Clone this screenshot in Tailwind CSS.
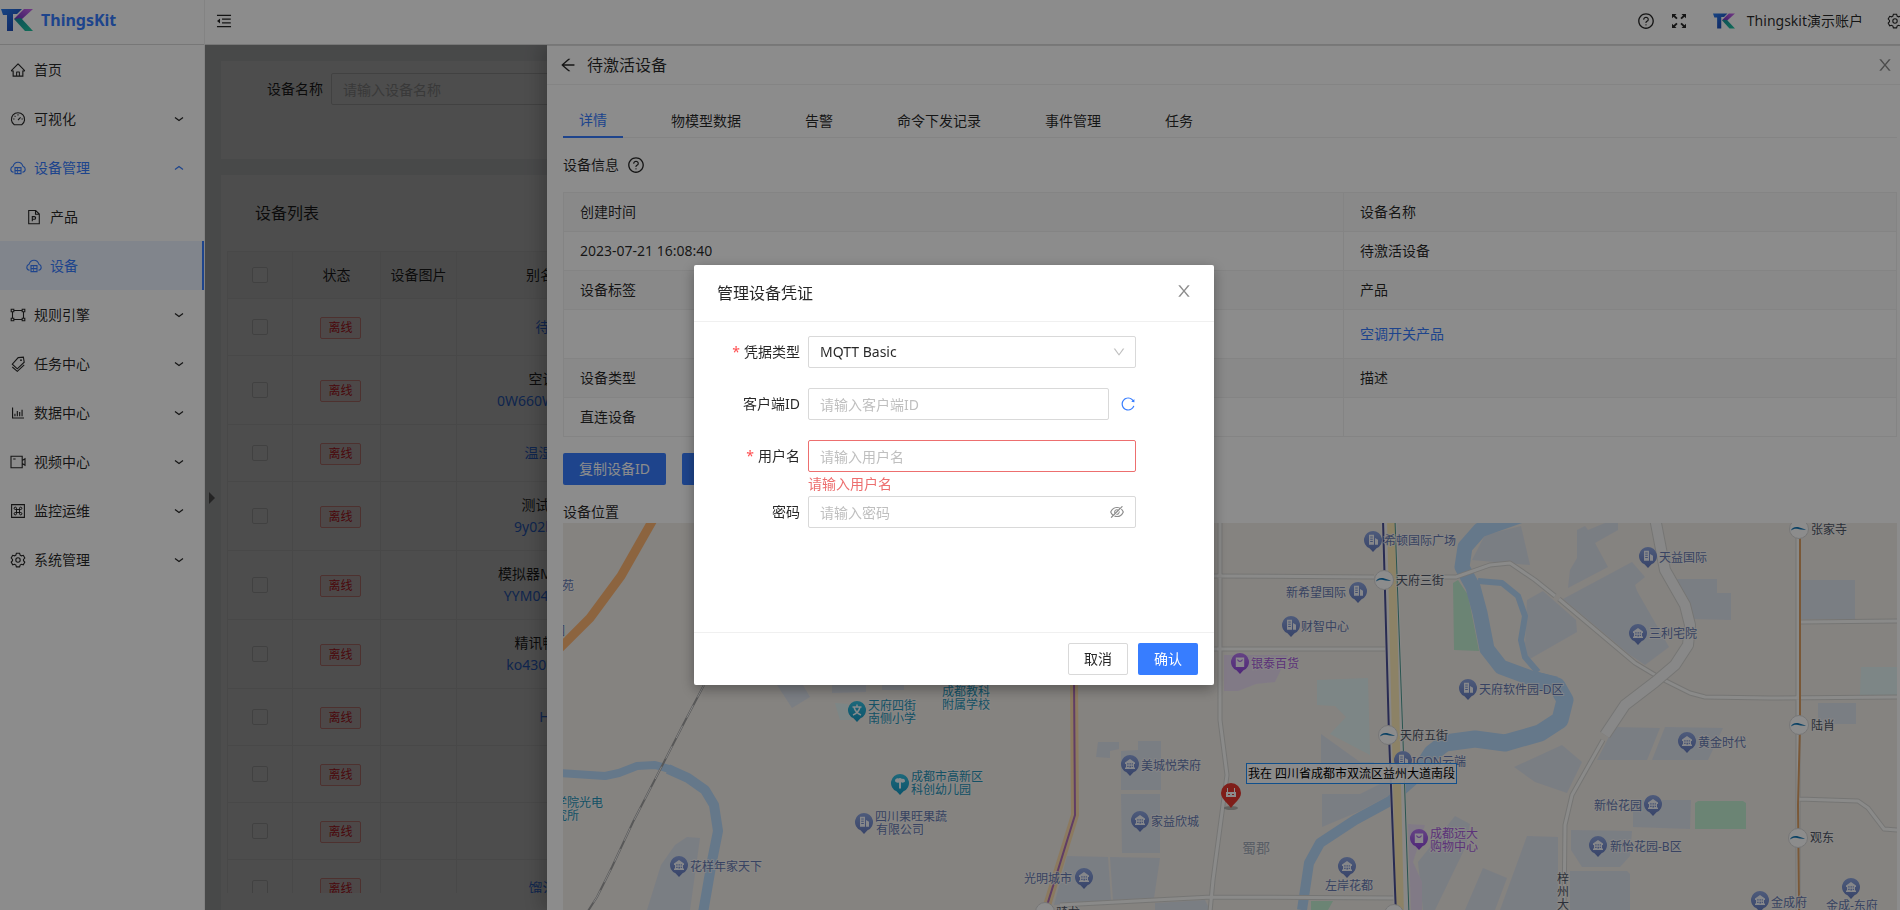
<!DOCTYPE html>
<html lang="zh-CN">
<head>
  <meta charset="UTF-8" />
  <meta name="viewport" content="width=device-width, initial-scale=1.0"/>
  <title>ThingsKit | 设备</title>
  <script src="https://cdn.jsdelivr.net/npm/@tailwindcss/browser@4"></script>
  <style>
    body {
      font-family: 'Noto Sans', 'Noto Sans CJK SC', sans-serif;
    }
  </style>
</head>
<body class="h-screen overflow-hidden bg-[#f0f2f5] text-sm leading-[22px] text-black/85">

  <!-- shared icons -->
  <svg class="absolute size-0" aria-hidden="true">
    <defs>
      <linearGradient id="tk-t" x1="0" y1="0" x2="1" y2="1"><stop offset="0" stop-color="#2a7df0"/><stop offset="1" stop-color="#1b3fa8"/></linearGradient>
      <linearGradient id="tk-k" x1="1" y1="0" x2="0" y2="1"><stop offset="0" stop-color="#d06af0"/><stop offset="1" stop-color="#6a2fc0"/></linearGradient>
      <linearGradient id="tk-g" x1="0" y1="0" x2="1" y2="1"><stop offset="0" stop-color="#1a8fa0"/><stop offset="1" stop-color="#1fc8a0"/></linearGradient>
      <linearGradient id="pin-blue-bg" x1="0" y1="0" x2="0" y2="1"><stop offset="0" stop-color="#8ea6e0"/><stop offset="1" stop-color="#667cc0"/></linearGradient>
      <linearGradient id="pin-teal-bg" x1="0" y1="0" x2="0" y2="1"><stop offset="0" stop-color="#35bfe0"/><stop offset="1" stop-color="#1598c4"/></linearGradient>
      <linearGradient id="pin-purple-bg" x1="0" y1="0" x2="0" y2="1"><stop offset="0" stop-color="#b77af0"/><stop offset="1" stop-color="#8f45dc"/></linearGradient>
    </defs>
    <symbol id="logo" viewBox="0 0 32 22">
      <path fill="url(#tk-t)" d="M0 0h21l-5 5h-4v17H6V6H2z"/>
      <path fill="url(#tk-k)" d="M23 0h9L20 11l-7-1z"/>
      <path fill="url(#tk-g)" d="M13 10l7-1 12 13h-8z"/>
    </symbol>
    <symbol id="i-fold" viewBox="0 0 1024 1024"><path d="M400 370v72h496v-72zM400 582v72h496v-72zM112 160v72h800v-72zM112 792v72h800v-72zM115.400 518.900L271.700 642c5.800 4.600 14.400.5 14.400-6.900V388.900c0-7.400-8.500-11.500-14.400-6.900L115.400 505.100a8.740 8.740 0 000 13.800z"/></symbol>
    <symbol id="i-question" viewBox="0 0 1024 1024"><path d="M512 64C264.600 64 64 264.600 64 512s200.600 448 448 448 448-200.600 448-448S759.400 64 512 64zm0 820c-205.400 0-372-166.600-372-372s166.600-372 372-372 372 166.600 372 372-166.600 372-372 372z"/><path d="M623.600 316.700C593.600 290.400 554 276 512 276s-81.600 14.500-111.600 40.700C369.200 344 352 380.700 352 420v7.600c0 4.400 3.600 8 8 8h48c4.400 0 8-3.600 8-8V420c0-44.100 43.100-80 96-80s96 35.900 96 80c0 31.100-22 59.600-56.100 72.700-21.200 8.100-39.200 22.300-52.100 40.900-13.100 19-19.900 41.800-19.900 64.900V620c0 4.400 3.600 8 8 8h48c4.400 0 8-3.600 8-8v-22.700a48.300 48.300 0 0130.900-44.800c59-22.700 97.100-74.700 97.100-132.500.1-39.300-17.100-76-48.300-103.300zM472 732a40 40 0 1080 0 40 40 0 10-80 0z"/></symbol>
    <symbol id="i-close" viewBox="0 0 1024 1024"><path d="M563.800 512l262.500-312.900c4.400-5.200.7-13.100-6.100-13.100h-79.800c-4.700 0-9.200 2.100-12.300 5.700L511.600 449.800 295.100 191.700c-3-3.600-7.500-5.700-12.300-5.700H203c-6.800 0-10.500 7.900-6.100 13.100L459.400 512 196.900 824.900A7.950 7.950 0 00203 838h79.800c4.700 0 9.200-2.100 12.300-5.700l216.500-258.100 216.500 258.100c3 3.600 7.500 5.700 12.300 5.700h79.800c6.800 0 10.500-7.900 6.100-13.100L563.800 512z"/></symbol>
    <symbol id="i-home" viewBox="0 0 1024 1024"><path d="M946.500 505L560.100 118.800l-25.900-25.900a31.500 31.500 0 00-44.400 0L77.500 505a63.900 63.900 0 00-18.800 46c.4 35.200 29.700 63.300 64.900 63.300h42.500V940h691.800V614.300h43.400c17.100 0 33.200-6.700 45.300-18.800a63.600 63.600 0 0018.700-45.300c0-17-6.700-33.100-18.800-45.200zM568 868H456V664h112v204zm217.900-325.700V868H632V640c0-22.100-17.900-40-40-40H432c-22.100 0-40 17.900-40 40v228H238.100V542.300h-96l370-369.700 23.100 23.100L882 542.300h-96.100z"/></symbol>
    <symbol id="i-reload" viewBox="0 0 1024 1024"><path d="M909.100 209.300l-56.400 44.100C775.800 155.100 656.200 92 521.900 92 290 92 102.300 279.500 102 511.500 101.700 743.700 289.800 932 521.900 932c181.300 0 335.800-115 394.600-276.100 1.500-4.200-.7-8.900-4.900-10.300l-56.700-19.500a8 8 0 00-10.100 4.800c-1.800 5-3.800 10-5.900 14.900-17.300 41-42.100 77.800-73.700 109.400A344.770 344.770 0 01655.900 829c-42.300 17.900-87.400 27-133.800 27-46.500 0-91.500-9.100-133.800-27A341.500 341.500 0 01279 755.200a342.160 342.160 0 01-73.700-109.400c-17.900-42.400-27-87.400-27-133.900s9.100-91.500 27-133.900c17.300-41 42.100-77.800 73.700-109.400 31.600-31.600 68.400-56.400 109.300-73.800 42.300-17.900 87.400-27 133.800-27 46.500 0 91.500 9.100 133.800 27a341.500 341.500 0 01109.300 73.800c9.900 9.900 19.200 20.400 27.800 31.400l-60.200 47a8 8 0 003 14.100l175.600 43c5 1.200 9.900-2.600 9.900-7.700l.8-180.900c-.1-6.600-7.800-10.300-13-6.200z"/></symbol>
    <symbol id="i-back" viewBox="0 0 1024 1024"><path d="M872 474H286.900l350.200-304c5.600-4.900 2.200-14-5.200-14h-88.500c-3.900 0-7.600 1.400-10.500 3.900L155 487.800a31.960 31.960 0 000 48.300L535.100 866c1.500 1.300 3.300 2 5.200 2h91.500c7.400 0 10.800-9.200 5.200-14L286.900 550H872c4.400 0 8-3.600 8-8v-60c0-4.400-3.600-8-8-8z"/></symbol>
    <symbol id="i-down" viewBox="0 0 1024 1024"><path d="M884 256h-75c-5.100 0-9.900 2.500-12.900 6.600L512 654.200 227.900 262.600c-3-4.100-7.800-6.600-12.900-6.600h-75c-6.500 0-10.300 7.400-6.500 12.700l352.600 486.100c12.800 17.600 39 17.600 51.700 0l352.600-486.100c3.900-5.300.1-12.700-6.400-12.700z"/></symbol>
    <symbol id="i-eye-off" viewBox="0 0 1024 1024"><path d="M942.200 486.200Q889.470 375.110 816.700 305l-50.880 50.880C807.310 395.530 843.450 447.400 874.700 512 791.500 684.200 673.400 766 512 766q-72.670 0-133.870-22.380L323 798.750Q408 838 512 838q288.300 0 430.200-300.300a60.290 60.290 0 000-51.500zm-63.570-320.640L836 122.880a8 8 0 00-11.320 0L715.310 232.200Q624.860 186 512 186q-288.300 0-430.200 300.300a60.300 60.300 0 000 51.500q56.690 119.400 136.500 191.410L112.480 835a8 8 0 000 11.310L155.170 889a8 8 0 0011.310 0l712.150-712.120a8 8 0 000-11.320zM149.300 512C232.600 339.800 350.700 258 512 258c54.540 0 104.130 9.360 149.120 28.390l-70.300 70.300a176 176 0 00-238.130 238.130l-83.420 83.420C223.100 637.490 183.300 582.280 149.300 512zm246.700 0a112.110 112.110 0 01146.200-106.690L401.310 546.200A112 112 0 01396 512z"/><path d="M508 624c-3.460 0-6.870-.16-10.250-.47l-52.820 52.820a176.090 176.090 0 00227.420-227.420l-52.820 52.820c.31 3.380.47 6.790.47 10.250a111.940 111.940 0 01-112 112z"/></symbol>
    <symbol id="i-chart" viewBox="0 0 1024 1024"><path d="M888 792H200V168c0-4.400-3.600-8-8-8h-56c-4.400 0-8 3.600-8 8v688c0 4.400 3.600 8 8 8h752c4.400 0 8-3.600 8-8v-56c0-4.400-3.600-8-8-8zM280 552h72v160h-72zM432 376h72v336h-72zM584 454h72v258h-72zM736 296h72v416h-72z"/></symbol>
    <symbol id="i-dash" viewBox="0 0 16 16"><path fill="none" stroke="currentColor" stroke-width="1.100" d="M4.300 13.800a6.600 6.600 0 1 1 7.400 0zM8 9l2.600-2.600M8 3.200v1.300M3.200 8h1.300M11.500 8h1.300M4.600 4.800l.9.9"/></symbol>
    <symbol id="i-cloud" viewBox="0 0 16 16"><path fill="none" stroke="currentColor" stroke-width="1.100" d="M3.600 12.300C1.800 12 .8 10.700.8 9.200c0-1.500 1-2.600 2.300-3C3.800 3.900 5.700 2.300 8 2.300s4.200 1.600 4.900 3.900c1.300.4 2.300 1.500 2.300 3 0 1.500-1 2.800-2.800 3.100M5 7.600h6v6H5zM5 10.600h6M7 9.100h1M7 12.100h1"/></symbol>
    <symbol id="i-doc" viewBox="0 0 16 16"><path fill="none" stroke="currentColor" stroke-width="1.100" d="M2.700 1.500h7l3.600 3.600v9.600H2.700zM9.500 1.700v3.600h3.700M6.300 12.200V7.600h2a1.300 1.300 0 0 1 0 2.600h-2"/></symbol>
    <symbol id="i-rule" viewBox="0 0 16 16"><path fill="none" stroke="currentColor" stroke-width="1.100" d="M1.200 2.200h2.600v2.600H1.200zM12.200 2.200h2.600v2.600h-2.600zM1.200 11.200h2.600v2.600H1.200zM12.200 11.200h2.600v2.600h-2.600zM3.800 3.500h8.400M3.800 12.500h8.400M2.500 4.800v6.400M13.500 4.800v6.400"/></symbol>
    <symbol id="i-tags" viewBox="0 0 16 16"><path fill="none" stroke="currentColor" stroke-width="1.100" d="M8.200 1.600l5.200-.4.800 5-6.900 6.600-5-4.600zM2.300 11l5 4.300 6.900-6.500"/><circle cx="11" cy="4.200" r=".9"/></symbol>
    <symbol id="i-video" viewBox="0 0 16 16"><path fill="none" stroke="currentColor" stroke-width="1.100" d="M1 2.200h11.200v11.600H1zM12.200 6.400l2.800-1.600v6.400l-2.800-1.600M3.200 5h2.400"/></symbol>
    <symbol id="i-monitor" viewBox="0 0 16 16"><path fill="none" stroke="currentColor" stroke-width="1.100" d="M1.600 1.600h12.800v12.800H1.600z"/><path fill="none" stroke="currentColor" d="M6.500 6.500h3v3h-3zM6.500 6.500H5.200a1.200 1.200 0 1 1 1.300-1.300zM9.500 6.500V5.200a1.200 1.200 0 1 1 1.300 1.300zM6.500 9.500v1.300a1.200 1.200 0 1 1-1.300-1.300zM9.500 9.500h1.300a1.200 1.200 0 1 1-1.300 1.300z"/></symbol>
    <symbol id="i-gear" viewBox="0 0 16 16"><path fill="none" stroke="currentColor" stroke-width="1.100" d="M6.400 1.200h3.200l.5 1.900 1.300.7 1.900-.5 1.500 2.700-1.300 1.400v1.300l1.300 1.400-1.500 2.700-1.900-.5-1.300.7-.5 1.900H6.400l-.5-1.900-1.300-.7-1.900.5-1.500-2.700 1.300-1.400V7.400L1.200 6l1.500-2.700 1.900.5 1.300-.7z"/><circle cx="8" cy="8" r="2.200" fill="none" stroke="currentColor" stroke-width="1.100"/></symbol>
    <symbol id="i-full" viewBox="0 0 16 16"><path d="M1 1h4.500L4 2.500l2.600 2.600-1.300 1.200L2.600 3.700 1 5.300zM15 1v4.300l-1.600-1.600-2.700 2.600-1.300-1.200L12 2.500 10.500 1zM1 15v-4.300l1.600 1.600 2.700-2.600 1.300 1.200L4 13.500 5.500 15zM15 15h-4.500l1.500-1.500-2.600-2.600 1.300-1.200 2.700 2.600 1.600-1.600z"/></symbol>
    <symbol id="i-chev" viewBox="0 0 10 10"><path fill="none" stroke="currentColor" stroke-width="1.200" d="M1 3.500l4 3 4-3"/></symbol>
    <!-- map pins, 20x24, round head centred on 10,10 -->
    <symbol id="pin-house" viewBox="0 0 20 24"><path fill="url(#pin-blue-bg)" d="M10 1a9 9 0 0 1 3.500 17.300L10 22l-3.500-3.700A9 9 0 0 1 10 1z"/><path fill="#f4f6fb" d="M5 8.500L10 5l5 3.500V10h-1v3.500h1V15H5v-1.500h1V10H5zM7.200 9.300v1.300h1.400V9.300zm2.300 0v1.300h1.400V9.300zm2.200 0v1.300h1.200V9.300zM7.200 11.800v1.300h1.400v-1.300zm2.300 0v1.700h1.400v-1.700zm2.200 0v1.300h1.200v-1.300z" fill-rule="evenodd"/></symbol>
    <symbol id="pin-tower" viewBox="0 0 20 24"><path fill="url(#pin-blue-bg)" d="M10 1a9 9 0 0 1 3.500 17.300L10 22l-3.500-3.700A9 9 0 0 1 10 1z"/><path fill="#f4f6fb" fill-rule="evenodd" d="M6 4.800h5v10H6zM7.200 6.500v1h2.600v-1zm0 2.300v1h2.600v-1zm0 2.300v1h2.600v-1zM12 8l3 1.800v5h-3z"/></symbol>
    <symbol id="pin-bag" viewBox="0 0 20 24"><path fill="url(#pin-purple-bg)" d="M10 1a9 9 0 0 1 3.500 17.300L10 22l-3.500-3.700A9 9 0 0 1 10 1z"/><path fill="#fbf6ff" d="M5.800 5.500h8.400V15H5.800z"/><path fill="none" stroke="#a25fe6" stroke-width="1.200" d="M7.600 7.500c.5 2.600 4.300 2.600 4.800 0"/></symbol>
    <symbol id="pin-school" viewBox="0 0 20 24"><path fill="url(#pin-teal-bg)" d="M10 1a9 9 0 0 1 3.500 17.300L10 22l-3.500-3.700A9 9 0 0 1 10 1z"/><path fill="none" stroke="#f4fbff" stroke-width="1.500" d="M10 4.500v2.300M5.500 7h9M7 7c.8 3.700 3 6.300 7 8M13 7c-.8 3.700-3 6.300-7 8"/></symbol>
    <symbol id="pin-kids" viewBox="0 0 20 24"><path fill="url(#pin-teal-bg)" d="M10 1a9 9 0 0 1 3.500 17.300L10 22l-3.500-3.700A9 9 0 0 1 10 1z"/><path fill="#f4fbff" d="M5 8c0-2 2-3.200 3.400-2.400C9.400 4.600 11 4.800 12 6c2-.6 3.200.6 3 2.600-.8 1-2.600 1.400-4 .6V15.500H9V9.400C7.600 10 5.600 9.600 5 8z"/></symbol>
    <symbol id="metro" viewBox="0 0 20 20"><circle cx="10" cy="10" r="9.500" fill="#fff" stroke="#d8d8d8"/><path fill="#1478b8" d="M2 11.500c.8-3 4.500-4.200 8.500-3 2.200.6 3.800 1.600 6.500 2-3 .6-5.500-.2-8-.6-3-.4-5 .2-7 1.600z"/></symbol>
  </svg>

  <div class="flex h-full">
    <aside class="relative z-20 flex w-[205px] shrink-0 flex-col border-r border-[#eeeeee] bg-white">
      <a href="#" class="flex h-[45px] shrink-0 items-center border-b border-[#d9d9d9] pb-1 pl-px text-base font-bold text-[#377dff]">
        <svg class="mr-2 h-[22px] w-8"><use href="#logo"/></svg>ThingsKit
      </a>
      <nav class="flex flex-col">
        <a href="#" class="flex h-[49px] items-center pl-2.5"><svg class="mr-2 size-4 fill-current"><use href="#i-home"/></svg>首页</a>
        <a href="#" class="flex h-[49px] items-center pl-2.5 pr-5"><svg class="mr-2 size-4 fill-current"><use href="#i-dash"/></svg>可视化<svg class="ml-auto size-2.5"><use href="#i-chev"/></svg></a>
        <a href="#" class="flex h-[49px] items-center pl-2.5 pr-5 text-[#377dff]"><svg class="mr-2 size-4 fill-current"><use href="#i-cloud"/></svg>设备管理<svg class="ml-auto size-2.5 rotate-180"><use href="#i-chev"/></svg></a>
        <a href="#" class="flex h-[49px] items-center pl-[26px]"><svg class="mr-2 size-4 fill-current"><use href="#i-doc"/></svg>产品</a>
        <a href="#" class="flex h-[49px] items-center border-r-2 border-[#377dff] bg-[#ebf2ff] pl-[26px] text-[#377dff]"><svg class="mr-2 size-4 fill-current"><use href="#i-cloud"/></svg>设备</a>
        <a href="#" class="flex h-[49px] items-center pl-2.5 pr-5"><svg class="mr-2 size-4 fill-current"><use href="#i-rule"/></svg>规则引擎<svg class="ml-auto size-2.5"><use href="#i-chev"/></svg></a>
        <a href="#" class="flex h-[49px] items-center pl-2.5 pr-5"><svg class="mr-2 size-4 fill-current"><use href="#i-tags"/></svg>任务中心<svg class="ml-auto size-2.5"><use href="#i-chev"/></svg></a>
        <a href="#" class="flex h-[49px] items-center pl-2.5 pr-5"><svg class="mr-2 size-4 fill-current"><use href="#i-chart"/></svg>数据中心<svg class="ml-auto size-2.5"><use href="#i-chev"/></svg></a>
        <a href="#" class="flex h-[49px] items-center pl-2.5 pr-5"><svg class="mr-2 size-4 fill-current"><use href="#i-video"/></svg>视频中心<svg class="ml-auto size-2.5"><use href="#i-chev"/></svg></a>
        <a href="#" class="flex h-[49px] items-center pl-2.5 pr-5"><svg class="mr-2 size-4 fill-current"><use href="#i-monitor"/></svg>监控运维<svg class="ml-auto size-2.5"><use href="#i-chev"/></svg></a>
        <a href="#" class="flex h-[49px] items-center pl-2.5 pr-5"><svg class="mr-2 size-4 fill-current"><use href="#i-gear"/></svg>系统管理<svg class="ml-auto size-2.5"><use href="#i-chev"/></svg></a>
      </nav>
    </aside>

    <div class="flex min-w-0 flex-1 flex-col">
      <header class="flex h-[45px] shrink-0 items-center overflow-hidden border-b border-[#d9d9d9] bg-white pb-0.5 pl-2.5">
        <button type="button" aria-label="收起菜单"><svg class="size-[18px] fill-current"><use href="#i-fold"/></svg></button>
        <div class="-mr-[3px] ml-auto flex items-center">
          <svg class="mr-4 size-[18px] fill-current"><use href="#i-question"/></svg>
          <svg class="mr-[26px] size-4 fill-current"><use href="#i-full"/></svg>
          <svg class="mr-3 h-4 w-[22px]"><use href="#logo"/></svg>
          <span class="mr-6">Thingskit演示账户</span>
          <svg class="size-4 fill-current"><use href="#i-gear"/></svg>
        </div>
      </header>

      <main class="relative flex min-h-0 flex-1 flex-col gap-4 overflow-hidden pl-4 pt-4">
        <section class="h-[98px] shrink-0 bg-white pl-[46px] pt-3">
          <div class="flex items-center gap-2">
            <label for="device-name">设备名称</label>
            <input id="device-name" type="text" placeholder="请输入设备名称" class="h-8 w-[360px] rounded-xs border border-[#d9d9d9] px-[11px] placeholder:text-[#bfbfbf]"/>
          </div>
        </section>
        <section class="flex min-h-0 flex-1 flex-col bg-white px-1.5 pb-[17px]">
          <h2 class="flex h-[76px] shrink-0 items-center pl-7 text-base">设备列表</h2>
          <div class="min-h-0 overflow-hidden">
            <table class="w-[458px] table-fixed border-separate border-spacing-0 border-l border-t border-[#f0f0f0] text-center">
              <thead>
                <tr class="h-[47px] bg-[#fafafa]">
                  <th class="w-[65px] border-b border-r border-[#f0f0f0]"><input type="checkbox" aria-label="全选" class="block mx-auto size-4 appearance-none rounded-xs border border-[#d9d9d9] bg-white"/></th>
                  <th class="w-[88px] border-b border-r border-[#f0f0f0] font-normal">状态</th>
                  <th class="w-[76px] border-b border-r border-[#f0f0f0] font-normal">设备图片</th>
                  <th class="w-[228px] border-b border-r border-[#f0f0f0] font-normal">别名/设备名称</th>
                </tr>
              </thead>
              <tbody id="device-rows"></tbody>
            </table>
          </div>
        </section>

        <!-- sider toggle -->
        <div class="absolute left-1 top-[447px] border-y-6 border-l-6 border-y-transparent border-l-black/50"></div>

        <!-- drawer -->
        <div class="absolute inset-0 bg-black/45"></div>
        <div class="absolute inset-y-0 left-[342px] right-0 flex flex-col border-t border-[#dddddd] bg-white shadow-[-6px_0_16px_rgba(0,0,0,0.2)]">
          <div class="flex h-[39px] shrink-0 items-center border-b border-[#f0f0f0] pl-3 pr-1.5">
            <button type="button" aria-label="返回" class="mr-2.5"><svg class="size-[18px] fill-current"><use href="#i-back"/></svg></button>
            <h2 class="text-base">待激活设备</h2>
            <button type="button" aria-label="关闭" class="ml-auto text-black/45"><svg class="size-[18px] fill-current"><use href="#i-close"/></svg></button>
          </div>
          <div class="flex min-h-0 flex-1 flex-col overflow-hidden pl-4 pr-[3px] pt-[19px]">
            <div role="tablist" class="flex h-[34px] shrink-0 gap-8 border-b border-[#f0f0f0]">
              <button type="button" role="tab" class="-mb-px border-b-2 border-[#377dff] px-4 text-[#377dff]">详情</button>
              <button type="button" role="tab" class="px-4">物模型数据</button>
              <button type="button" role="tab" class="px-4">告警</button>
              <button type="button" role="tab" class="px-4">命令下发记录</button>
              <button type="button" role="tab" class="px-4">事件管理</button>
              <button type="button" role="tab" class="px-4">任务</button>
            </div>
            <div class="flex h-[54px] shrink-0 items-center gap-2">设备信息<svg class="size-[18px] fill-current"><use href="#i-question"/></svg></div>
            <table class="w-full shrink-0 table-fixed border-separate border-spacing-0 border-l border-t border-[#f0f0f0] text-left">
              <colgroup><col class="w-[780px]"/><col/></colgroup>
              <tbody>
                <tr class="h-[39px] bg-[#fafafa]"><th class="border-b border-r border-[#f0f0f0] px-4 font-normal">创建时间</th><th class="border-b border-r border-[#f0f0f0] px-4 font-normal">设备名称</th></tr>
                <tr class="h-[39px]"><td class="border-b border-r border-[#f0f0f0] px-4">2023-07-21 16:08:40</td><td class="border-b border-r border-[#f0f0f0] px-4">待激活设备</td></tr>
                <tr class="h-[39px] bg-[#fafafa]"><th class="border-b border-r border-[#f0f0f0] px-4 font-normal">设备标签</th><th class="border-b border-r border-[#f0f0f0] px-4 font-normal">产品</th></tr>
                <tr class="h-[49px]"><td class="border-b border-r border-[#f0f0f0] px-4"></td><td class="border-b border-r border-[#f0f0f0] px-4"><a href="#" class="text-[#377dff]">空调开关产品</a></td></tr>
                <tr class="h-[39px] bg-[#fafafa]"><th class="border-b border-r border-[#f0f0f0] px-4 font-normal">设备类型</th><th class="border-b border-r border-[#f0f0f0] px-4 font-normal">描述</th></tr>
                <tr class="h-[39px]"><td class="border-b border-r border-[#f0f0f0] px-4">直连设备</td><td class="border-b border-r border-[#f0f0f0] px-4"></td></tr>
              </tbody>
            </table>
            <div class="mt-4 flex shrink-0 gap-4">
              <button type="button" class="h-8 rounded-xs bg-[#377dff] px-4 text-white">复制设备ID</button>
              <button type="button" class="h-8 rounded-xs bg-[#377dff] px-4 text-white">管理凭证</button>
            </div>
            <div class="mt-4 shrink-0">设备位置</div>
            <div class="relative min-h-0 flex-1 overflow-hidden bg-[#f2eee9]">
              <svg id="map" viewBox="563 523 1334 387" preserveAspectRatio="xMinYMin slice" class="h-full w-full">
                <g fill="#dfe5ef">
                  <path d="M647 910l14-45 14-20 12-8 13 1-10 72zM777 685h26l7 12-18 11zM832 685h34v7l-34 1zM882 685h22v5h-22z"/>
                  <path d="M1098 742h21v7l-9 2v7l-14-1zM1121 751l17-1v-9h23v49h-40zM1121 794h39v59h-38zM1067 856l41 1 3 43-57 5zM1110 857l50 1-6 40-41 2zM1155 903l50-3 5 10h-55z"/>
                  <path d="M1321 734l39 28h14v13h-53zM1322 794h38l30-15v16l-30 16-38 16zM1472 560l13-25 36-9 9 39zM1577 530l8-4 3 4 17-7h13v7l-23 13 13 24-40 21 2-18 7-12z"/>
                  <path d="M1563 599l69-37 13 15-10 8 2 6 32 56-24 18-15-10zM1527 600l16-9 33 29 1 12-49 28-3-15zM1675 579h42v14h14v27l-39-1zM1801 580h54v39h-54zM1818 703h38v21h-38z"/>
                  <path d="M1597 760l17-33 46 1-13 32zM1652 760l13-33 58 1-15 32zM1514 767l48-22 20 17-15 31-32-11zM1633 800h58l-1 29-57-2zM1571 830l61 1-2 25-10 11h-38l-11-17zM1527 836l31 1v73h-58zM1570 871h57l3 3v36h-60zM1418 862l37-46 15 8-4 22-31 64h-12zM1483 868l24 10-12 32h-30z"/>
                </g>
                <path fill="#e3f5f4" d="M1317 680l51-2 2 77-40-21 16-17-11-11-18-1zM1861 667h36v28h-37zM835 703l13 1 4 16h-12z"/>
                <path fill="#c3f0d3" d="M1453 583l5-3 10 15 11 56-25-1zM1695 803l3-2h45l3 2v26h-51zM1311 901h22l-5 9h-17z"/>
                <path fill="#ecdff5" d="M1224 655h64l-13 27-19 2-18 7h-14zM1408 824l17 1-12 37 9 20v28h-11z"/>
                <!-- rivers -->
                <g fill="none" stroke="#b8dafb" stroke-linejoin="round">
                  <path stroke-width="8" d="M560 773l45 3 14-3 18-7 18-1 18 5"/>
                  <path stroke-width="10" d="M668 769l20 9 17 12 9 15 4 26-6 30-9 52"/>
                  <path stroke-width="15" d="M1525 514l-45 16-15 17-3 20 11 20 7 26 7 36 14 18 30 11 25 6"/>
                  <path stroke-width="17" d="M1535 680l22 6 8 14-5 20-20 13-35 10-30-4-30 4-13 10-13 20"/>
                  <path stroke-width="10" d="M1425 770l-35 31-35 19-35 23-11 20-7 47"/>
                  <path stroke-width="6" d="M1478 581l24 2 16 13 7 20-4 24 4 17 13 15"/>
                </g>
                <!-- minor roads: casing, then fill -->
                <g fill="none" stroke-linejoin="round">
                  <path stroke="#d6d6d3" stroke-width="5" d="M1220 520v200l7 55-14 105-3 32M1214 649h176M1214 576l160 1M1396 577h60l34-12 20-2 25 17 20 16M1559 599l76 64 25 15 30 15 15 4 65 1 130-1M1603 740l-31 55-7 30-1 90M1060 905l152-8 183 1M1801 622l96-1M1799 799l59 2 10 7 16 21 14 1M1798 538v372"/>
                  <path stroke="#fbfbfa" stroke-width="3" d="M1220 520v200l7 55-14 105-3 32M1214 649h176M1214 576l160 1M1396 577h60l34-12 20-2 25 17 20 16M1559 599l76 64 25 15 30 15 15 4 65 1 130-1M1603 740l-31 55-7 30-1 90M1060 905l152-8 183 1M1801 622l96-1M1799 799l59 2 10 7 16 21 14 1M1798 538v372"/>
                  <path stroke="#d6d6d3" stroke-width="12" d="M1655 518l10 52 20 35 5 20-2 20-13 20-20 17-30 23-20 30"/>
                  <path stroke="#f8f8f7" stroke-width="10" d="M1655 518l10 52 20 35 5 20-2 20-13 20-20 17-30 23-20 30"/>
                </g>
                <!-- main roads and metro lines -->
                <path fill="none" stroke="#ffb673" stroke-width="9" d="M654 518l-33 58-31 42-34 34"/>
                <path fill="none" stroke="#ffdfae" stroke-width="8" d="M1074 680l1 135-30 97"/>
                <path fill="none" stroke="#b070b8" stroke-width="2" d="M1074 680l1 135-30 97"/>
                <path fill="none" stroke="#f8f6f4" stroke-width="16" d="M1389 520l7 220 6 175"/>
                <path fill="none" stroke="#ffedbb" stroke-width="8" d="M1391 520l5 220 4 175"/>
                <path fill="none" stroke="#4a4f96" stroke-width="2" d="M1383 520l6 215 7 180"/>
                <path fill="none" stroke="#4c9a90" stroke-width="1" d="M1395 520l8 220 6 175"/>
                <path fill="none" stroke="#dfa064" stroke-width="2" d="M1800 538v187l-2 80 1 105"/>
                <path fill="none" stroke="#a0a0a0" stroke-width="2" d="M704 685l-19 36-22 43-30 58-21 45-15 30-9 14"/>
                <path fill="none" stroke="#f2f2f2" stroke-width="1" stroke-dasharray="14 9" d="M704 685l-19 36-22 43-30 58-21 45-15 30-9 14"/>
              </svg>
              <div class="absolute left-[683px] top-[240px] border border-[#1e90ff] bg-white/90 px-px text-xs leading-[19px] whitespace-nowrap text-black">我在 四川省成都市双流区益州大道南段</div>
            </div>
          </div>
        </div>
      </main>
    </div>
  </div>

  <!-- modal -->
  <div class="fixed inset-0 z-50 flex items-start justify-center bg-black/45 pl-2 pt-[265px]">
    <div role="dialog" aria-labelledby="modal-title" class="flex h-[420px] w-[520px] flex-col rounded-xs bg-white shadow-[0_4px_14px_rgba(0,0,0,0.35)]">
      <div class="flex h-[57px] items-center justify-between border-b border-[#f0f0f0] pl-[23px] pr-[21px]">
        <h3 id="modal-title" class="text-base">管理设备凭证</h3>
        <button type="button" aria-label="关闭" class="mb-1 text-black/45"><svg class="size-[18px] fill-current"><use href="#i-close"/></svg></button>
      </div>
      <form class="grid flex-1 grid-cols-[106px_328px] content-start gap-x-2 pt-3.5">
        <label for="credential-type" class="text-right leading-8"><span class="mr-1 text-[#ff4d4f]">*</span>凭据类型</label>
        <div class="relative mb-5">
          <select id="credential-type" class="h-8 w-full appearance-none rounded-xs border border-[#d9d9d9] px-[11px]">
            <option>MQTT Basic</option>
          </select>
          <svg class="pointer-events-none absolute right-2.5 top-[9px] size-3.5 fill-[#bfbfbf]"><use href="#i-down"/></svg>
        </div>
        <label for="client-id" class="text-right leading-8">客户端ID</label>
        <div class="mb-5 flex items-center gap-[11px]">
          <input id="client-id" type="text" placeholder="请输入客户端ID" class="h-8 min-w-0 flex-1 rounded-xs border border-[#d9d9d9] px-[11px] placeholder:text-[#bfbfbf]"/>
          <button type="button" aria-label="重新生成" class="text-[#377dff]"><svg class="size-4 fill-current"><use href="#i-reload"/></svg></button>
        </div>
        <label for="username" class="text-right leading-8"><span class="mr-1 text-[#ff4d4f]">*</span>用户名</label>
        <div>
          <input id="username" type="text" placeholder="请输入用户名" class="block h-8 w-full rounded-xs border border-[#ed6f6f] px-[11px] placeholder:text-[#bfbfbf]"/>
          <p class="h-6 leading-6 text-[#ed6f6f]">请输入用户名</p>
        </div>
        <label for="password" class="text-right leading-8">密码</label>
        <div class="relative">
          <input id="password" type="password" placeholder="请输入密码" class="block h-8 w-full rounded-xs border border-[#d9d9d9] px-[11px] placeholder:text-[#bfbfbf]"/>
          <svg class="absolute right-[11px] top-2 size-4 fill-[#8c8c8c]"><use href="#i-eye-off"/></svg>
        </div>
      </form>
      <div class="flex h-[53px] justify-end gap-2.5 border-t border-[#f0f0f0] px-4 pt-2.5">
        <button type="button" class="h-8 w-[60px] rounded-xs border border-[#d9d9d9]">取消</button>
        <button type="button" class="h-8 w-[60px] rounded-xs bg-[#377dff] text-white">确认</button>
      </div>
    </div>
  </div>

  <script>
    // device list: alias, device name
    const devices = [
      ["", "待激活设备"],
      ["空调开关设备", "0W660W8ZK2hQ4mT7"],
      ["", "温湿度传感器1"],
      ["测试网关子设备", "9y02lKq8fT4sXbd"],
      ["模拟器MQTT网关设备1", "YYM04kTq8fWsXbZd"],
      ["精讯畅通网关设备", "ko430lqTz8mWsXbt"],
      ["", "HTTP设备"],
      ["", "网关"],
      ["", "测试"],
      ["", "馏油温度设备"],
    ];
    document.getElementById("device-rows").innerHTML = devices.map(([alias, name]) => `
      <tr class="${alias ? "h-[69px]" : "h-[57px]"}">
        <td class="border-b border-r border-[#f0f0f0]"><input type="checkbox" aria-label="选择" class="block mx-auto size-4 appearance-none rounded-xs border border-[#d9d9d9] bg-white"/></td>
        <td class="border-b border-r border-[#f0f0f0] pl-2"><span class="inline-block h-[22px] rounded-xs border border-[#ffa39e] bg-[#fff1f0] px-[7px] text-xs leading-5 text-[#f5222d]">离线</span></td>
        <td class="border-b border-r border-[#f0f0f0]"></td>
        <td class="border-b border-r border-[#f0f0f0]">${alias ? `<div>${alias}</div>` : ""}<a href="#" class="text-[#377dff]">${name}</a></td>
      </tr>`).join("");

    // map labels: text, x, baseline, kind
    const labels = [
      ["苑", 562, 590, "blue"], ["园", 553, 635, "blue"],
      ["学院光电", 555, 807, "teal"], ["究所", 555, 820, "teal"],
      ["天府四街", 868, 710, "teal"], ["南侧小学", 868, 723, "teal"],
      ["成都教科", 942, 696, "teal"], ["附属学校", 942, 709, "teal"],
      ["成都市高新区", 911, 781, "teal"], ["科创幼儿园", 911, 794, "teal"],
      ["四川果旺果蔬", 875, 821, "blue"], ["有限公司", 876, 834, "blue"],
      ["花样年家天下", 690, 871, "blue"], ["美城悦荣府", 1141, 770, "blue"],
      ["家益欣城", 1151, 826, "blue"], ["光明城市", 1024, 883, "blue"],
      ["左岸花都", 1325, 890, "blue"], ["银泰百货", 1251, 668, "purple"],
      ["成都远大", 1430, 838, "purple"], ["购物中心", 1430, 851, "purple"],
      ["希顿国际广场", 1384, 545, "blue"], ["新希望国际", 1286, 597, "blue"],
      ["财智中心", 1301, 631, "blue"], ["天府软件园-D区", 1479, 694, "blue"],
      ["ICON云端", 1412, 766, "blue"], ["天益国际", 1659, 562, "blue"],
      ["三利宅院", 1649, 638, "blue"], ["黄金时代", 1698, 747, "blue"],
      ["新怡花园", 1594, 810, "blue"], ["新怡花园-B区", 1610, 851, "blue"],
      ["金成府", 1771, 907, "blue"], ["金成-东府", 1826, 910, "blue"],
      ["天府三街", 1396, 585, "metro"], ["天府五街", 1400, 740, "metro"],
      ["张家寺", 1811, 534, "metro"], ["陆肖", 1811, 730, "metro"], ["观东", 1810, 842, "metro"],
      ["骑龙", 1056, 917, "metro"],
      ["梓", 1557, 883, "metro"], ["州", 1557, 896, "metro"], ["大", 1557, 909, "metro"],
      ["蜀郡", 1242, 853, "area"],
    ];
    const pins = [
      ["pin-school", 857, 710], ["pin-kids", 900, 783], ["pin-tower", 864, 822], ["pin-house", 679, 865],
      ["pin-house", 1130, 764], ["pin-house", 1140, 820], ["pin-house", 1084, 877], ["pin-house", 1347, 866],
      ["pin-bag", 1240, 662], ["pin-bag", 1419, 838], ["pin-tower", 1373, 540], ["pin-tower", 1358, 591],
      ["pin-tower", 1291, 625], ["pin-tower", 1468, 688], ["pin-tower", 1403, 760], ["pin-tower", 1648, 556],
      ["pin-house", 1638, 633], ["pin-house", 1687, 741], ["pin-house", 1653, 804], ["pin-house", 1598, 845],
      ["pin-house", 1760, 900], ["pin-house", 1851, 887],
    ];
    const stations = [[1384, 580], [1388, 735], [1394, 914], [1045, 912], [1799, 529], [1799, 725], [1798, 838]];
    const labelClass = {
      blue: "text-xs fill-[#667ab2]",
      teal: "text-xs fill-[#2694b8]",
      purple: "text-xs fill-[#a85cdc]",
      metro: "text-xs fill-[#4f5666]",
      area: "text-sm fill-[#a3acb8]",
    };
    let overlay = "";
    for (const [x, y] of stations) overlay += `<use href="#metro" x="${x - 10}" y="${y - 10}" width="20" height="20"/>`;
    for (const [id, x, y] of pins) overlay += `<use href="#${id}" x="${x - 10}" y="${y - 10}" width="20" height="24"/>`;
    for (const [text, x, y, kind] of labels) {
      overlay += `<text x="${x}" y="${y}" class="${labelClass[kind]}" stroke="#f8f6f4" stroke-width="2" stroke-opacity="0.7" paint-order="stroke">${text}</text>`;
    }
    // current position marker
    overlay += `<ellipse cx="1231" cy="808" rx="7" ry="2" fill="#000" opacity="0.25"/>
      <path fill="#e8382f" d="M1231 783a10 10 0 0 1 10 10c0 6-7 10-10 15-3-5-10-9-10-15a10 10 0 0 1 10-10z"/>
      <path fill="#fff" d="M1227 788h1v4h6v-4h1v4h1v5h-10v-5h1z"/>
      <path fill="#e8382f" d="M1228 794h2v1h-2zM1232 794h2v1h-2z"/>`;
    document.getElementById("map").insertAdjacentHTML("beforeend", overlay);
  </script>
</body>
</html>
